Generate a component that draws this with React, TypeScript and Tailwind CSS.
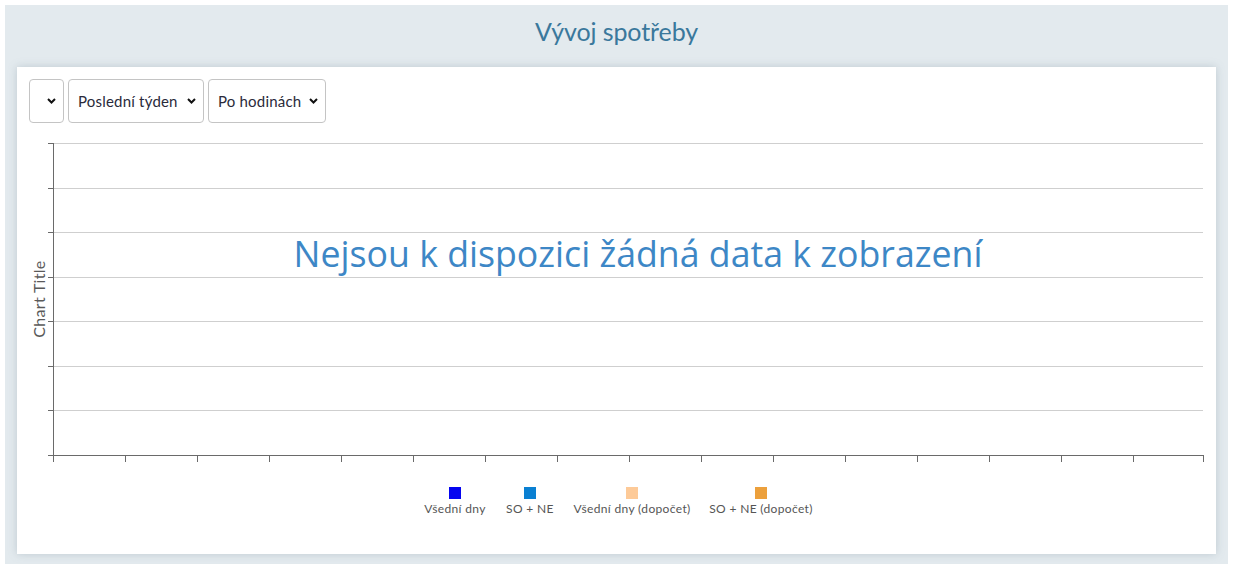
import React from 'react';

const gridYs = Array.from({ length: 8 }, (_, i) => 20 + (312 / 7) * i);
const tickXs = [...Array.from({ length: 16 }, (_, i) => 36 + 72 * i), 1186];

const legend = [
  { label: 'Všední dny', color: '#0505f0', x: 438 },
  { label: 'SO + NE', color: '#0a80d2', x: 513 },
  { label: 'Všední dny (dopočet)', color: '#fdca98', x: 615 },
  { label: 'SO + NE (dopočet)', color: '#eca03c', x: 744 },
];

const Select: React.FC<{ value: string; width: string }> = ({ value, width }) => (
  <div className={`relative h-11 ${width} rounded border border-[#c4c4c4] bg-white flex items-center pl-[9px] text-[15px] tracking-[0.2px] text-[#2a2a3a]`}>
    <span>{value}</span>
    <svg className="absolute right-[7px] top-1/2 -translate-y-1/2" width="9" height="6" viewBox="0 0 9 6">
      <path d="M1 1 L4.5 4.5 L8 1" fill="none" stroke="#111" strokeWidth="2" />
    </svg>
  </div>
);

const App: React.FC = () => {
  return (
    <div className="w-[1233px] h-[569px] bg-white p-[5px]" style={{ fontFamily: 'Lato, "Open Sans", sans-serif' }}>
      <div className="h-full bg-[#e3eaee] px-3 pb-[10px] flex flex-col">
        {/* Header */}
        <div className="h-[62px] pt-3 text-center">
          <h2 className="text-[25px] leading-7 text-[#3a789c] tracking-[-0.1px]">Vývoj spotřeby</h2>
        </div>

        {/* Card */}
        <div className="flex-1 bg-white shadow-[0_0_8px_rgba(120,140,155,0.35)]">
          <div className="flex gap-1 px-3 pt-3">
            <Select value="" width="w-[35px]" />
            <Select value="Poslední týden" width="w-[136px]" />
            <Select value="Po hodinách" width="w-[118px]" />
          </div>

          <svg width="1200" height="400" className="block">
            {gridYs.map((y, i) => (
              <line key={i} x1={36} x2={1186} y1={Math.round(y) + 0.5} y2={Math.round(y) + 0.5} stroke="#cfcfcf" strokeWidth="1" />
            ))}
            {gridYs.map((y, i) => (
              <line key={`t${i}`} x1={31} x2={36} y1={Math.round(y) + 0.5} y2={Math.round(y) + 0.5} stroke="#6a6a6a" strokeWidth="1" />
            ))}
            <line x1={36.5} x2={36.5} y1={20} y2={332} stroke="#6a6a6a" strokeWidth="1" />
            <line x1={36} x2={1186} y1={332.5} y2={332.5} stroke="#6a6a6a" strokeWidth="1" />
            {tickXs.map((x, i) => (
              <line key={`x${i}`} x1={x + 0.5} x2={x + 0.5} y1={332} y2={339} stroke="#6a6a6a" strokeWidth="1" />
            ))}

            <text x={21} y={176} transform="rotate(-90 21 176)" textAnchor="middle" dominantBaseline="central" fontSize="16" letterSpacing="0.3" fill="#5a5a5a" style={{ fontFamily: 'Lato, sans-serif' }}>
              Chart Title
            </text>

            <text x={621} y={130} textAnchor="middle" dominantBaseline="central" fontSize="35.7" fill="#3d87c6" style={{ fontFamily: '"Open Sans", sans-serif' }}>
              Nejsou k dispozici žádná data k zobrazení
            </text>

            {legend.map((l) => (
              <g key={l.label}>
                <rect x={l.x - 6} y={364} width={12} height={12} fill={l.color} />
                <text x={l.x} y={390} textAnchor="middle" fontSize="12" letterSpacing="0.35" fill="#555" style={{ fontFamily: 'Lato, sans-serif' }}>
                  {l.label}
                </text>
              </g>
            ))}
          </svg>
        </div>
      </div>
    </div>
  );
};

export default App;
